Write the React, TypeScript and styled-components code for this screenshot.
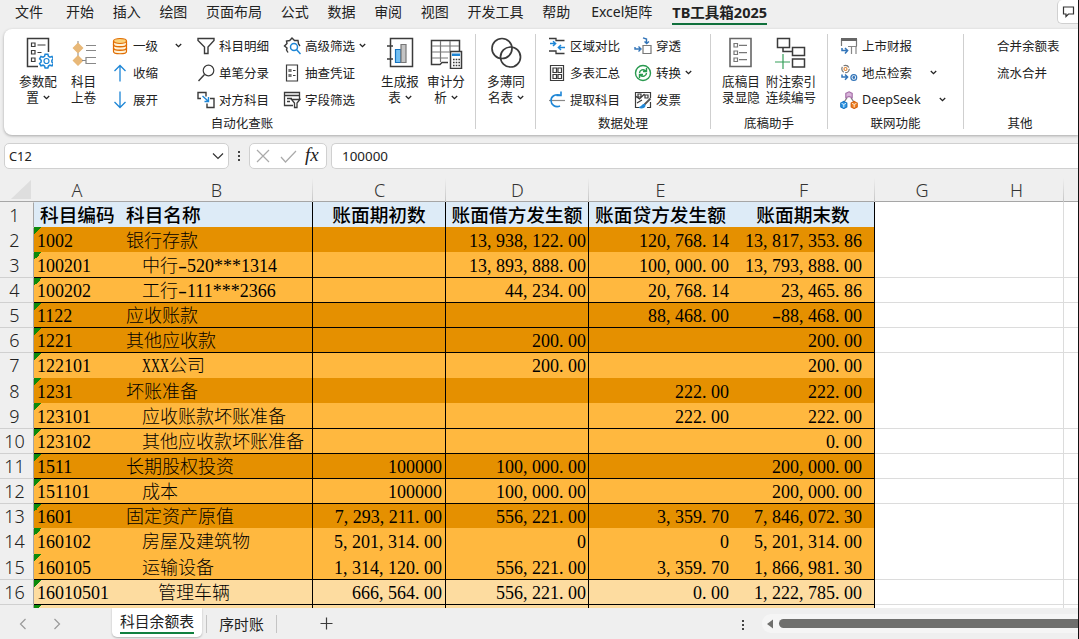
import React from "react";
import styled, { createGlobalStyle, css } from "styled-components";

const uiFont = `"Noto Sans", "Noto Sans CJK SC", sans-serif`;
const cellFont = `"Liberation Serif", "Noto Sans CJK SC", serif`;

const GlobalStyle = createGlobalStyle`
  *, *::before, *::after { box-sizing: border-box; }
  html, body { margin: 0; padding: 0; }
  body { overflow: hidden; background: #efefef; }
`;

const Window = styled.div`
  width: 1079px;
  height: 639px;
  overflow: hidden;
  display: flex;
  flex-direction: column;
  background: #efefef;
  border-right: 1px solid #111;
  font-family: ${uiFont};
  color: #222;
`;

/* ---------- menu ---------- */

const MenuBar = styled.nav`
  height: 29px;
  flex: none;
  display: flex;
  align-items: flex-start;
  padding-left: 15px;
`;

const MenuItem = styled.div<{ $gap?: number; $active?: boolean }>`
  height: 25px;
  line-height: 24px;
  font-size: 14px;
  white-space: nowrap;
  margin-right: ${(p) => p.$gap ?? 18.7}px;
  ${(p) =>
    p.$active &&
    css`
      font-weight: 700;
      font-size: 14.5px;
      border-bottom: 2px solid #10703c;
    `}
`;

const CommentButton = styled.div`
  margin-left: auto;
  width: 21px;
  height: 24px;
  background: #fff;
  border: 1px solid #d0d0d0;
  border-width: 0 0 1px 1px;
  border-radius: 5px 0 0 5px;
  display: flex;
  align-items: center;
  justify-content: center;
`;

/* ---------- ribbon ---------- */

const Ribbon = styled.section`
  height: 106px;
  flex: none;
  margin-left: 4px;
  background: #fff;
  border-radius: 8px 0 0 8px;
  box-shadow: 0 1px 3px rgba(0, 0, 0, 0.3);
  display: flex;
`;

const Group = styled.div<{ $width: number; $last?: boolean }>`
  width: ${(p) => p.$width}px;
  flex: none;
  height: 95px;
  margin-top: 5px;
  display: flex;
  flex-direction: column;
  border-right: ${(p) => (p.$last ? "none" : "1px solid #cfcfcf")};
`;

const Tools = styled.div<{ $pad: number }>`
  height: 80px;
  flex: none;
  display: flex;
  padding-left: ${(p) => p.$pad}px;
`;

const GroupLabel = styled.div<{ $shift?: number }>`
  flex: none;
  height: 16px;
  line-height: 16px;
  margin-top: 2px;
  padding-left: ${(p) => p.$shift ?? 0}px;
  text-align: center;
  font-size: 12.5px;
`;

const Big = styled.div<{ $width: number }>`
  width: ${(p) => p.$width}px;
  flex: none;
  display: flex;
  flex-direction: column;
  align-items: center;
  padding-top: 3px;
  svg { flex: none; margin-bottom: 5px; }
`;

const BigLine = styled.div`
  display: flex;
  align-items: center;
  gap: 4px;
  height: 15.5px;
  line-height: 15.5px;
  font-size: 12.6px;
  white-space: nowrap;
  svg { margin: 0; }
`;

const Column = styled.div<{ $width: number; $pad?: number }>`
  width: ${(p) => p.$width}px;
  flex: none;
  padding-left: ${(p) => p.$pad ?? 6}px;
  margin-top: -2px;
`;

const Small = styled.div<{ $chevronGap?: number }>`
  height: 27px;
  display: flex;
  align-items: center;
  font-size: 12.5px;
  white-space: nowrap;
  > svg:first-child { margin-right: 4px; flex: none; }
  > span + svg { margin-left: ${(p) => p.$chevronGap ?? 2}px; flex: none; }
`;

/* ---------- formula bar ---------- */

const FormulaBar = styled.section`
  height: 43px;
  flex: none;
  display: flex;
  padding: 8px 0 9px 4px;
  font-size: 13.4px;
`;

const Field = styled.div<{ $width?: number; $left?: number; $open?: boolean }>`
  ${(p) => (p.$width ? `width: ${p.$width}px; flex: none;` : "flex: 1;")}
  height: 26px;
  margin-left: ${(p) => p.$left ?? 0}px;
  background: #fff;
  border: 1px solid #d0d0d0;
  border-right-width: ${(p) => (p.$open ? 0 : 1)}px;
  border-radius: ${(p) => (p.$open ? "5px 0 0 5px" : "5px")};
  display: flex;
  align-items: center;
`;

const NameText = styled.span`
  flex: 1;
  padding-left: 4px;
  font-size: 12.8px;
`;

const FormulaText = styled.span`
  padding-left: 10px;
`;

const Dots = styled.div<{ $margin?: string }>`
  width: 2px;
  flex: none;
  margin: ${(p) => p.$margin ?? 0};
  display: flex;
  flex-direction: column;
  justify-content: center;
  gap: 2px;
  i { width: 2px; height: 2px; background: #444; }
`;

const Fx = styled.span`
  font: italic 19px "Liberation Serif", serif;
  margin-left: 7px;
  margin-top: -2px;
  color: #222;
`;

/* ---------- sheet ---------- */

const columns = "34px 86px 193px 133px 143px 143px 143px 94px 95px 1fr";

const Sheet = styled.main`
  height: 430px;
  flex: none;
  overflow: hidden;
  background: #fff;
`;

const HeadRow = styled.div`
  height: 24px;
  display: grid;
  grid-template-columns: ${columns};
  background: #efefef;
  border-bottom: 1px solid #a6a6a6;
`;

const Head = styled.div<{ $rule?: boolean }>`
  font: 300 18px "Noto Sans", sans-serif;
  line-height: 24px;
  color: #333;
  text-align: center;
  ${(p) =>
    p.$rule &&
    css`
      background: linear-gradient(#efefef, #c4c4c4) right / 1px 100% no-repeat;
    `}
`;

const Corner = styled.div`
  display: flex;
  justify-content: flex-end;
  align-items: flex-end;
  padding: 0 3px 3px 0;
  &::after {
    content: "";
    border: solid transparent;
    border-width: 19px 0 0 20px;
    border-top: 0;
    border-bottom: 19px solid #dedede;
  }
`;

type Tone = "head" | "dark" | "mid" | "pale";
const tones: Record<Tone, string> = {
  head: "#ddebf7",
  dark: "#e59000",
  mid: "#ffb83f",
  pale: "#fddca0",
};

const Row = styled.div<{ $first?: boolean }>`
  height: ${(p) => (p.$first ? 24.75 : 25.15)}px;
  display: grid;
  grid-template-columns: ${columns};
  grid-template-rows: 100%;
`;

const RowNumber = styled.div<{ $line: boolean }>`
  background: #efefef;
  border-right: 1px solid #a6a6a6;
  border-top: 1px solid ${(p) => (p.$line ? "#d0d0d0" : "#efefef")};
  padding-right: 4px;
  text-align: center;
  font: 300 18px "Noto Sans", sans-serif;
  line-height: 25px;
  color: #222;
`;

const Cell = styled.div<{
  $tone: Tone;
  $line: boolean;
  $rule?: boolean;
  $align?: string;
  $pad?: string;
  $flag?: boolean;
}>`
  background-color: ${(p) => tones[p.$tone]};
  ${(p) =>
    p.$flag &&
    css`
      background-image: linear-gradient(135deg, #0b8a0b 50%, transparent 50%);
      background-size: 8px 8px;
      background-repeat: no-repeat;
    `}
  border-top: ${(p) => (p.$line ? "1px solid #000" : "0")};
  padding-top: ${(p) => (p.$line ? 0 : 1)}px;
  border-right: ${(p) => (p.$rule ? "1px solid #000" : "0")};
  padding-left: ${(p) => p.$pad?.split(" ")[0] ?? "0"};
  padding-right: ${(p) => p.$pad?.split(" ")[1] ?? "0"};
  text-align: ${(p) => p.$align ?? "left"};
  font-family: ${cellFont};
  font-size: ${(p) => (p.$tone === "head" ? 18.7 : 18)}px;
  font-weight: ${(p) => (p.$tone === "head" ? 500 : 300)};
  line-height: ${(p) => (p.$tone === "head" ? 25 : 26.5)}px;
  color: #000;
  white-space: pre;
  overflow: hidden;
`;

const Blank = styled.div<{ $line: boolean; $rule?: boolean }>`
  background: #fff;
  border-top: ${(p) => (p.$line ? "1px solid #dcdcdc" : "0")};
  border-right: ${(p) => (p.$rule ? "1px solid #dcdcdc" : "0")};
`;

const Punctuation = styled.span`
  letter-spacing: 0.25em;
`;

const Stretched = styled.span<{ $width: number; $scale: number }>`
  display: inline-block;
  width: ${(p) => p.$width}px;
  text-align: left;
  transform: scaleX(${(p) => p.$scale});
  transform-origin: left;
`;

/* ---------- sheet tabs ---------- */

const TabBar = styled.footer`
  height: 31px;
  flex: none;
  display: flex;
  align-items: flex-start;
  background: #efefef;
`;

const TabNav = styled.div`
  width: 112px;
  height: 31px;
  display: flex;
  align-items: center;
  gap: 26px;
  padding-left: 19px;
`;

const ActiveTab = styled.div`
  width: 90px;
  height: 29px;
  padding: 0 8px;
  background: #fff;
  border-radius: 0 0 5px 5px;
  box-shadow: 0 1px 2px rgba(0, 0, 0, 0.25);
  font-size: 14.8px;
  line-height: 27px;
  white-space: nowrap;
  span { display: block; height: 26px; border-bottom: 2px solid #10803f; }
`;

const Tab = styled.div`
  height: 18px;
  margin: 7px 0 0 4px;
  width: 71px;
  border: solid #c4c4c4;
  border-width: 0 1px;
  text-align: center;
  font-size: 14.8px;
  line-height: 19px;
`;

const AddTab = styled.div`
  margin: 9px 0 0 43px;
  height: 13px;
  display: flex;
`;

const TabDots = styled.div`
  margin: 0 18px 0 409px;
  height: 33px;
  display: flex;
`;

const ScrollTrack = styled.div`
  flex: 1;
  height: 19px;
  margin-top: 6px;
  background: #f5f5f5;
  border-radius: 9px 0 0 9px;
  display: flex;
  align-items: center;
  padding-left: 4px;
`;

const Thumb = styled.div`
  flex: 1;
  height: 9px;
  margin-left: 5px;
  background: #6f6f6d;
  border-radius: 5px 0 0 5px;
`;

/* ---------- icons ---------- */

const ink = "#3b3b3b";
const blue = "#1e86d6";

const Svg = ({ w, h, children }: { w: number; h: number; children: React.ReactNode }) => (
  <svg width={w} height={h} viewBox={`0 0 ${w} ${h}`} fill="none" stroke={ink} strokeWidth={1.2}>
    {children}
  </svg>
);

const Chevron = () => (
  <Svg w={7} h={5}>
    <path d="M.8 1l2.7 2.6L6.2 1" stroke="#222" strokeWidth={1.3} />
  </Svg>
);

const gear = "M-1.6-8h3.2l.7 2.5 1.7 1 2.5-.8 1.6 2.7-1.8 1.8v2l1.8 1.8-1.6 2.7-2.5-.8-1.7 1-.7 2.4h-3.2l-.7-2.4-1.7-1-2.5.8-1.6-2.7 1.8-1.8v-2l-1.8-1.8 1.6-2.7 2.5.8 1.7-1z";

const ConfigIcon = () => (
  <Svg w={30} h={32}>
    <path d="M15 29.5H4.5v-28h21V15" strokeWidth={1.5} />
    <path d="M8.5 6H12v3.500H8.500zM8.5 13.5H12V17H8.500zM8.5 21H12v3.500H8.500zM14.5 8h8M14.500 15.5h4" />
    <path d={gear} transform="translate(23.5 24) scale(.85)" stroke={blue} strokeWidth={1.8} fill="#fff" />
    <circle cx="23.500" cy="24" r="2.5" stroke={blue} />
  </Svg>
);
const RollIcon = () => (
  <Svg w={28} h={32}>
    <path d="M8 4v24" stroke="#999" />
    <path d="M8 5.500l5.500 5.500-5.500 5.500-5.500-5.500zM8 18l5.500 5.500L8 29l-5.500-5.500z" fill="#e8b878" stroke="none" />
    <path d="M16 8.500h10M16 13.500h10M12 23.500h4M26 20.500H16v6h10" stroke="#888" />
  </Svg>
);
const ReportIcon = () => (
  <Svg w={30} h={32}>
    <path d="M5.5 1.5h22v28h-22zM2 9h6M2 22h6" strokeWidth={1.5} />
    <path d="M10.5 12.5H16v13h-5.500z" fill="#72bff2" stroke="#1573c0" />
    <path d="M16 7.5h5v18h-5z" fill="#c4c4c4" stroke="#777" />
  </Svg>
);
const AuditIcon = () => (
  <Svg w={34} h={32}>
    <path d="M19 25.5h-6l-2 2H2.5v-24h28V14" strokeWidth={1.5} />
    <path d="M3 9h27M3 15h18M3 21h16M11.5 4v21M21 4v10" stroke="#777" />
    <path d="M21.5 14.5h11v17h-11z" fill="#fff" strokeWidth={1.5} />
    <path d="M23.500 17h7v1.500h-7z" fill={blue} stroke={blue} />
    <path d="M24 22.500h7M24 25.500h7M24 28.500h7" strokeDasharray="1.6 1.1" strokeWidth={1.7} />
  </Svg>
);
const RingsIcon = () => (
  <Svg w={32} h={32}>
    <circle cx="12" cy="11.5" r="10" strokeWidth={1.7} />
    <circle cx="20.5" cy="20" r="10" strokeWidth={1.7} />
  </Svg>
);
const ListIcon = () => (
  <Svg w={28} h={32}>
    <path d="M3 1.5h21v28H3z" stroke="#666" strokeWidth={1.6} />
    <path d="M7 6.5h3.5V10H7zM7 14h3.5v3.5H7zM7 21h3.5v3.5H7zM12 8.3h8M12 15.7h8M12 22.7h8" stroke="#777" />
  </Svg>
);
const NumberingIcon = () => (
  <Svg w={34} h={32}>
    <path d="M3.5 1.5h12v9h-12zM9 10.5v4h9M18.5 10.5h12v8h-12zM18.5 22h12v8h-12z" strokeWidth={1.5} />
    <path d="M9 17v15M1 25h15" stroke="#36a05a" />
  </Svg>
);

const DatabaseIcon = () => (
  <Svg w={18} h={18}>
    <path d="M2.5 4v10.5c0 3 13 3 13 0V4" fill="#fff3d8" stroke="#e06c00" />
    <ellipse cx="9" cy="4" rx="6.5" ry="2.5" fill="#fbd27a" stroke="#e06c00" />
    <path d="M2.5 7.5c0 3 13 3 13 0M2.5 11c0 3 13 3 13 0" stroke="#e06c00" strokeWidth={1.5} />
  </Svg>
);
const UpIcon = () => (
  <Svg w={18} h={18}><path d="M9 17.5v-16M3.5 7L9 1.500 14.5 7" stroke={blue} strokeWidth={1.3} /></Svg>
);
const DownIcon = () => (
  <Svg w={18} h={18}><path d="M9 .5v16M3.500 11L9 16.500 14.500 11" stroke={blue} strokeWidth={1.3} /></Svg>
);
const FunnelIcon = () => (
  <Svg w={18} h={18}><path d="M1 1.500h16v2L11 10v6.500H7.500V10L1 3.500z" strokeWidth={1.4} /></Svg>
);
const LensIcon = () => (
  <Svg w={18} h={18}><circle cx="11.5" cy="6.5" r="5.3" /><path d="M7.500 10.500L1.500 17" strokeWidth={1.4} /></Svg>
);
const CounterIcon = () => (
  <Svg w={18} h={18}>
    <path d="M4 7.500H1v-6h8v4M10 12.500v4h7v-9h-4" strokeWidth={1.4} />
    <path d="M5.500 5l5.500 5M11.500 6v4.500H7.500" stroke={blue} strokeWidth={1.4} />
  </Svg>
);
const GearLensIcon = () => (
  <Svg w={18} h={18}>
    <path d="M5 15.5L3.500 13l.5-2-2.500-2L4 6.500 3.500 4l3.200-.5L9 1l2.500 2.500L15 3.500l.5 3.300L17 9" strokeWidth={1.4} />
    <circle cx="11" cy="10" r="3.5" stroke={blue} strokeWidth={1.5} />
    <path d="M13.500 12.500l4 4.500" stroke={blue} strokeWidth={1.5} />
  </Svg>
);
const VoucherIcon = () => (
  <Svg w={18} h={18}>
    <path d="M3.5 1h11v16h-11z" />
    <path d="M6 5.5h2v2H6zM6 10.5h2v2H6z" fill="#777" stroke="#777" />
    <path d="M10 6.500h2.500M10 11.500h2.500" />
  </Svg>
);
const FieldIcon = () => (
  <Svg w={18} h={18}>
    <path d="M10 14.500H1.500v-13h15V8M1.500 4.500h15M4 7.500h5M4 10.500h3" strokeWidth={1.3} />
    <path d="M8.500 8.500H17l-3 3.500v4.500h-2.500V12z" fill="#fff" strokeWidth={1.3} />
  </Svg>
);
const CompareIcon = () => (
  <Svg w={18} h={18}>
    <path d="M1 1.500h7v2h8.500M1 14h7v2.500h8.500" strokeWidth={1.3} />
    <path d="M2 6.500h5.500M5 4.200l2.600 2.300L5 9M17 10.500h-6.500M13 8l-2.600 2.500L13 13" stroke={blue} strokeWidth={1.5} />
  </Svg>
);
const MultiTableIcon = () => (
  <Svg w={18} h={18}>
    <path d="M2.5 1.5h13v15h-13z" />
    <path d="M5 4h3.500v4.500H5zM10 4h3.500v4.500H10zM5 10.500h3.500v4H5zM10 10.500h3.500v4H10z" />
  </Svg>
);
const ExtractIcon = () => (
  <Svg w={18} h={18}>
    <path d="M1 9.500h16" stroke="#888" />
    <path d="M12 15C7 17 3 13.500 3 9.500 3 5 7 3 12 4M13 .5v4H8.500" stroke={blue} strokeWidth={1.6} />
  </Svg>
);
const DrillIcon = () => (
  <Svg w={18} h={18}>
    <path d="M9 8.500h8v8H9z" stroke="#777" />
    <path d="M12.500 6V2L9 .8M10.500 4.500l2.200 2 2.300-2M1 10v2h5M4.500 9.500L7 12l-2.500 2.500" stroke="#3274b8" strokeWidth={1.4} />
  </Svg>
);
const ConvertIcon = () => (
  <Svg w={18} h={18}>
    <circle cx="9" cy="9" r="7.5" stroke="#2a9a50" strokeWidth={1.4} />
    <path d="M5.500 9c0-3 4-4.500 6.500-2M12.500 4v3.500H9M12.500 9c0 3-4 4.500-6.500 2M5.500 14v-3.500H9" stroke="#2a9a50" strokeWidth={1.4} />
  </Svg>
);
const InvoiceIcon = () => (
  <Svg w={18} h={18}>
    <path d="M5 16.500H1.500v-15h15V7M1.500 5l4 3 5-5M4 3h3v3H4zM11 4h3v3h-3zM3 12l5-3M16.500 11v5.500H13" />
    <path d="M16.500 7.500l-6 6" stroke="#555" strokeWidth={1.8} />
    <path d="M5 16.500c3 0 3-3.500 5.500-3 1.500 2-1 4-5.500 3z" fill={blue} stroke={blue} />
  </Svg>
);
const FilingIcon = () => (
  <Svg w={18} h={18}>
    <path d="M1.500 9V2.500h15V9" stroke="#777" />
    <path d="M1 2.500h16" stroke="#666" strokeWidth={3} />
    <path d="M8 9.500h9M11.500 9v8M16 9v8" stroke="#888" />
    <path d="M2 11v2.500h5M5 11l2.600 2.500L5 16.500" stroke="#3274b8" strokeWidth={1.5} />
  </Svg>
);
const PlaceIcon = () => (
  <Svg w={18} h={18}>
    <circle cx="5.500" cy="5" r="3.700" stroke="#777" strokeDasharray="6 1.500" />
    <circle cx="5.500" cy="5" r="1.500" stroke="#e0883a" />
    <path d="M2 10.500V13h5M5 10.500L7.600 13 5 15.700" stroke="#3274b8" strokeWidth={1.5} />
    <circle cx="13.800" cy="13.500" r="2.900" stroke="#3274b8" />
    <circle cx="13.800" cy="13.500" r=".8" fill="#3274b8" stroke="#3274b8" />
  </Svg>
);
const CubesIcon = () => (
  <Svg w={18} h={18}>
    <path d="M7 7l-3 4M11 7l3 4" stroke="#777" />
    <path d="M9 .8l3.200 1.600v4.400L9 5.500 5.800 6.800V2.400z" fill="#d9b5da" stroke="#a873ab" />
    <path d="M3.800 10.500l3 1.500v4l-3 1.500-3-1.500v-4z" fill="#2f97e6" stroke="#1374c4" />
    <path d="M14.200 10.500l3 1.500v4l-3 1.500-3-1.500v-4z" fill="#f0811f" stroke="#d3620e" />
    <path d="M1.500 12.300l2.300 1.200L6 12.300M3.800 13.500v3M12 12.300l2.200 1.200 2.300-1.200M14.200 13.500v3" stroke="#fff" strokeWidth={0.8} />
  </Svg>
);

/* ---------- data ---------- */

type Entry = {
  code: string;
  name: string;
  indent: number;
  values: [string, string, string, string];
  tone: Tone;
  line?: boolean;
};

const entries: Entry[] = [
  { code: "1002", name: "银行存款", indent: 0, values: ["", "13,938,122.00", "120,768.14", "13,817,353.86"], tone: "dark" },
  { code: "100201", name: "中行-520***1314", indent: 1, values: ["", "13,893,888.00", "100,000.00", "13,793,888.00"], tone: "mid" },
  { code: "100202", name: "工行-111***2366", indent: 1, values: ["", "44,234.00", "20,768.14", "23,465.86"], tone: "mid", line: true },
  { code: "1122", name: "应收账款", indent: 0, values: ["", "", "88,468.00", "-88,468.00"], tone: "dark", line: true },
  { code: "1221", name: "其他应收款", indent: 0, values: ["", "200.00", "", "200.00"], tone: "dark", line: true },
  { code: "122101", name: "XXX公司", indent: 1, values: ["", "200.00", "", "200.00"], tone: "mid", line: true },
  { code: "1231", name: "坏账准备", indent: 0, values: ["", "", "222.00", "222.00"], tone: "dark" },
  { code: "123101", name: "应收账款坏账准备", indent: 1, values: ["", "", "222.00", "222.00"], tone: "mid" },
  { code: "123102", name: "其他应收款坏账准备", indent: 1, values: ["", "", "", "0.00"], tone: "mid", line: true },
  { code: "1511", name: "长期股权投资", indent: 0, values: ["100000", "100,000.00", "", "200,000.00"], tone: "dark", line: true },
  { code: "151101", name: "成本", indent: 1, values: ["100000", "100,000.00", "", "200,000.00"], tone: "mid", line: true },
  { code: "1601", name: "固定资产原值", indent: 0, values: ["7,293,211.00", "556,221.00", "3,359.70", "7,846,072.30"], tone: "dark", line: true },
  { code: "160102", name: "房屋及建筑物", indent: 1, values: ["5,201,314.00", "0", "0", "5,201,314.00"], tone: "mid" },
  { code: "160105", name: "运输设备", indent: 1, values: ["1,314,120.00", "556,221.00", "3,359.70", "1,866,981.30"], tone: "mid" },
  { code: "16010501", name: "管理车辆", indent: 2, values: ["666,564.00", "556,221.00", "0.00", "1,222,785.00"], tone: "pale", line: true },
];

/* Every half-width character takes half an em, so figures line up in columns. */
const HalfWidth = ({ text }: { text: string }) => (
  <>
    {text.split(/([,.]|-|X+)/).map((part, i) => {
      if (part === "," || part === ".") return <Punctuation key={i}>{part}</Punctuation>;
      if (part === "-") return <Stretched key={i} $width={9} $scale={1.5}>{part}</Stretched>;
      if (part.startsWith("X")) {
        return <Stretched key={i} $width={9 * part.length} $scale={0.69}>{part}</Stretched>;
      }
      return part;
    })}
  </>
);

const rightPads = ["0 3px", "0 2px", "0 3px", "0 12px"];

const menu: [string, number?][] = [
  ["文件", 23], ["开始"], ["插入"], ["绘图"], ["页面布局"], ["公式"], ["数据"],
  ["审阅"], ["视图"], ["开发工具"], ["帮助", 21], ["Excel矩阵", 20],
];

export default function App() {
  return (
    <Window>
      <GlobalStyle />
      <MenuBar>
        {menu.map(([label, gap]) => (
          <MenuItem key={label} $gap={gap}>{label}</MenuItem>
        ))}
        <MenuItem $active $gap={0}>TB工具箱2025</MenuItem>
        <CommentButton>
          <Svg w={13} h={13}><path d="M1.5 2h10v7h-5L4 11.500V9H1.500z" stroke="#333" /></Svg>
        </CommentButton>
      </MenuBar>

      <Ribbon>
        <Group $width={472}>
          <Tools $pad={10}>
            <Big $width={48}>
              <ConfigIcon />
              <BigLine>参数配</BigLine>
              <BigLine>置 <Chevron /></BigLine>
            </Big>
            <Big $width={43}>
              <RollIcon />
              <BigLine>科目</BigLine>
              <BigLine>上卷</BigLine>
            </Big>
            <Column $width={86}>
              <Small $chevronGap={17}><DatabaseIcon /><span>一级</span><Chevron /></Small>
              <Small><UpIcon /><span>收缩</span></Small>
              <Small><DownIcon /><span>展开</span></Small>
            </Column>
            <Column $width={86}>
              <Small><FunnelIcon /><span>科目明细</span></Small>
              <Small><LensIcon /><span>单笔分录</span></Small>
              <Small><CounterIcon /><span>对方科目</span></Small>
            </Column>
            <Column $width={100}>
              <Small $chevronGap={4}><GearLensIcon /><span>高级筛选</span><Chevron /></Small>
              <Small><VoucherIcon /><span>抽查凭证</span></Small>
              <Small><FieldIcon /><span>字段筛选</span></Small>
            </Column>
            <Big $width={46}>
              <ReportIcon />
              <BigLine>生成报</BigLine>
              <BigLine>表 <Chevron /></BigLine>
            </Big>
            <Big $width={46}>
              <AuditIcon />
              <BigLine>审计分</BigLine>
              <BigLine>析 <Chevron /></BigLine>
            </Big>
          </Tools>
          <GroupLabel $shift={5}>自动化查账</GroupLabel>
        </Group>

        <Group $width={60}>
          <Tools $pad={6}>
            <Big $width={48}>
              <RingsIcon />
              <BigLine>多薄同</BigLine>
              <BigLine>名表 <Chevron /></BigLine>
            </Big>
          </Tools>
        </Group>

        <Group $width={175}>
          <Tools $pad={6}>
            <Column $width={86}>
              <Small><CompareIcon /><span>区域对比</span></Small>
              <Small><MultiTableIcon /><span>多表汇总</span></Small>
              <Small><ExtractIcon /><span>提取科目</span></Small>
            </Column>
            <Column $width={80}>
              <Small><DrillIcon /><span>穿透</span></Small>
              <Small $chevronGap={4}><ConvertIcon /><span>转换</span><Chevron /></Small>
              <Small><InvoiceIcon /><span>发票</span></Small>
            </Column>
          </Tools>
          <GroupLabel>数据处理</GroupLabel>
        </Group>

        <Group $width={117}>
          <Tools $pad={5}>
            <Big $width={50}>
              <ListIcon />
              <BigLine>底稿目</BigLine>
              <BigLine>录显隐</BigLine>
            </Big>
            <Big $width={50}>
              <NumberingIcon />
              <BigLine>附注索引</BigLine>
              <BigLine>连续编号</BigLine>
            </Big>
          </Tools>
          <GroupLabel>底稿助手</GroupLabel>
        </Group>

        <Group $width={136}>
          <Tools $pad={6}>
            <Column $width={120}>
              <Small><FilingIcon /><span>上市财报</span></Small>
              <Small $chevronGap={18}><PlaceIcon /><span>地点检索</span><Chevron /></Small>
              <Small $chevronGap={18}><CubesIcon /><span>DeepSeek</span><Chevron /></Small>
            </Column>
          </Tools>
          <GroupLabel>联网功能</GroupLabel>
        </Group>

        <Group $width={112} $last>
          <Tools $pad={0}>
            <Column $width={110} $pad={33}>
              <Small><span>合并余额表</span></Small>
              <Small><span>流水合并</span></Small>
            </Column>
          </Tools>
          <GroupLabel>其他</GroupLabel>
        </Group>
      </Ribbon>

      <FormulaBar>
        <Field $width={225}>
          <NameText>C12</NameText>
          <svg width="18" height="8" viewBox="0 0 18 8" fill="none" stroke="#333" strokeWidth="1.2">
            <path d="M3 1.500l5 5 5-5" />
          </svg>
        </Field>
        <Dots $margin="0 9px"><i /><i /><i /></Dots>
        <Field $width={78}>
          <svg width="48" height="16" viewBox="0 0 48 16" fill="none" stroke="#aaa" strokeWidth="1.2">
            <path d="M7 2l12 12M19 2L7 14M31 9l4.500 5L46 3" />
          </svg>
          <Fx>fx</Fx>
        </Field>
        <Field $left={4} $open>
          <FormulaText>100000</FormulaText>
        </Field>
      </FormulaBar>

      <Sheet>
        <HeadRow>
          <Corner />
          <Head>A</Head>
          <Head $rule>B</Head>
          <Head $rule>C</Head>
          <Head $rule>D</Head>
          <Head>E</Head>
          <Head $rule>F</Head>
          <Head>G</Head>
          <Head $rule>H</Head>
          <Head />
        </HeadRow>
        <Row $first>
          <RowNumber $line={false}>1</RowNumber>
          <Cell $tone="head" $line={false} $pad="6px 0">科目编码</Cell>
          <Cell $tone="head" $line={false} $pad="6px 0" $rule>科目名称</Cell>
          <Cell $tone="head" $line={false} $align="center" $rule>账面期初数</Cell>
          <Cell $tone="head" $line={false} $align="center" $rule>账面借方发生额</Cell>
          <Cell $tone="head" $line={false} $align="center">账面贷方发生额</Cell>
          <Cell $tone="head" $line={false} $align="center" $rule>账面期末数</Cell>
          <Blank $line={false} />
          <Blank $line={false} $rule />
          <Blank $line={false} />
        </Row>
        {entries.map((e, i) => {
          const line = !!e.line;
          return (
            <Row key={e.code}>
              <RowNumber $line={line}>{i + 2}</RowNumber>
              <Cell $tone={e.tone} $line={line} $pad="3px 0" $flag>{e.code}</Cell>
              <Cell $tone={e.tone} $line={line} $pad={`${6 + e.indent * 16}px 0`} $rule>
                <HalfWidth text={e.name} />
              </Cell>
              {e.values.map((v, c) => (
                <Cell key={c} $tone={e.tone} $line={line} $align="right" $pad={rightPads[c]} $rule={c !== 2}>
                  <HalfWidth text={v} />
                </Cell>
              ))}
              <Blank $line={line} />
              <Blank $line={line} $rule />
              <Blank $line={line} />
            </Row>
          );
        })}
        <Row>
          <RowNumber $line />
          <Cell $tone="pale" $line $flag />
          <Cell $tone="pale" $line $rule />
          <Cell $tone="pale" $line $rule />
          <Cell $tone="pale" $line $rule />
          <Cell $tone="pale" $line />
          <Cell $tone="pale" $line $rule />
          <Blank $line />
          <Blank $line $rule />
          <Blank $line />
        </Row>
      </Sheet>

      <TabBar>
        <TabNav>
          <Svg w={8} h={12}><path d="M6.500 1l-5 5 5 5" stroke="#999" /></Svg>
          <Svg w={8} h={12}><path d="M1.500 1l5 5-5 5" stroke="#999" /></Svg>
        </TabNav>
        <ActiveTab><span>科目余额表</span></ActiveTab>
        <Tab>序时账</Tab>
        <AddTab><Svg w={13} h={13}><path d="M6.500.5v12M.5 6.500h12" /></Svg></AddTab>
        <TabDots><Dots><i /><i /><i /></Dots></TabDots>
        <ScrollTrack>
          <svg width="8" height="10" viewBox="0 0 8 10"><path d="M7 .5v9L1 5z" fill="#6f6f6d" /></svg>
          <Thumb />
        </ScrollTrack>
      </TabBar>
    </Window>
  );
}
